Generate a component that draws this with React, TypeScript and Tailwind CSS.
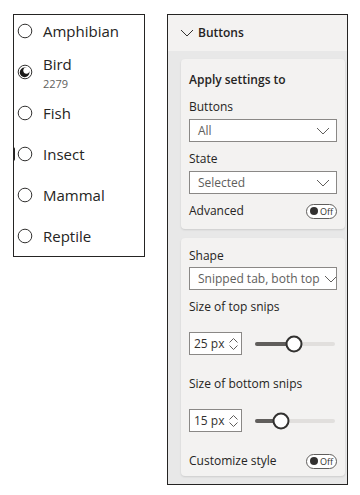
import React from "react";

const font = "font-['Open_Sans',sans-serif]";

function Radio({ filled }: { filled?: boolean }) {
  return (
    <svg width="16" height="16" viewBox="0 0 16 16" className="shrink-0">
      <circle cx="8" cy="8" r="6.8" fill="white" stroke="#323130" strokeWidth="1" />
      {filled && (
        <>
          <circle cx="7.6" cy="8.4" r="4.8" fill="#1b1a19" />
          <circle cx="9.4" cy="6.6" r="3.1" fill="white" />
        </>
      )}
    </svg>
  );
}

function Chevron({ className = "", color = "#323130" }: { className?: string; color?: string }) {
  return (
    <svg width="14" height="8" viewBox="0 0 14 8" className={className}>
      <path d="M1 1 L7 7 L13 1" fill="none" stroke={color} strokeWidth="1" />
    </svg>
  );
}

function Dropdown({ value }: { value: string }) {
  return (
    <div className="flex h-[23px] w-[148px] items-center justify-between overflow-hidden border border-[#8a8886] bg-white pl-[8px] pr-[6px]">
      <span className="whitespace-nowrap text-[12px] leading-none text-[#605e5c]">{value}</span>
      <Chevron className="ml-1 shrink-0" color="#605e5c" />
    </div>
  );
}

function Toggle() {
  return (
    <div className="flex h-[15px] w-[31px] items-center rounded-full border border-[#605e5c] bg-white pl-[3px]">
      <div className="h-[8px] w-[8px] rounded-full bg-[#323130]" />
      <span className="ml-[2px] text-[9px] leading-none text-[#323130]">Off</span>
    </div>
  );
}

function NumberSlider({ value, pct }: { value: string; pct: number }) {
  return (
    <div className="flex items-center">
      <div className="flex h-[23px] w-[53px] items-center justify-between border border-[#8a8886] bg-white pl-[4px] pr-[3px]">
        <span className="text-[12px] leading-none text-[#323130]">{value}</span>
        <div className="flex flex-col gap-[2px]">
          <svg width="9" height="5" viewBox="0 0 9 5">
            <path d="M0.5 4.5 L4.5 0.5 L8.5 4.5" fill="none" stroke="#605e5c" strokeWidth="1" />
          </svg>
          <svg width="9" height="5" viewBox="0 0 9 5">
            <path d="M0.5 0.5 L4.5 4.5 L8.5 0.5" fill="none" stroke="#605e5c" strokeWidth="1" />
          </svg>
        </div>
      </div>
      <div className="relative ml-[13px] h-[4px] w-[80px] rounded-full bg-[#e1dfdd]">
        <div className="h-full rounded-full bg-[#605e5c]" style={{ width: `${pct}%` }} />
        <div
          className="absolute top-1/2 h-[17px] w-[17px] -translate-x-1/2 -translate-y-1/2 rounded-full border-2 border-[#323130] bg-white"
          style={{ left: `${pct}%` }}
        />
      </div>
    </div>
  );
}

const items = ["Amphibian", "Bird", "Fish", "Insect", "Mammal", "Reptile"];

export default function App() {
  return (
    <div className={`${font} flex h-[495px] w-[360px] items-start bg-white text-[#252423]`}>
      {/* Left slicer */}
      <div className="relative ml-[13px] mt-[14px] h-[243px] w-[132px] overflow-hidden border border-[#252423] bg-white">
        <div className="absolute left-[-1px] top-[132px] h-[14px] w-[2px] rounded-r-full bg-[#252423]" />
        <div className="-mt-[5px] flex flex-col">
          {items.map((it) => (
            <div key={it} className="flex h-[41px] items-center pl-[3px]">
              <Radio filled={it === "Bird"} />
              {it === "Bird" ? (
                <div className="ml-[10px] mt-[2px] flex flex-col">
                  <span className="text-[15px] leading-[20px]">Bird</span>
                  <span className="mt-[3px] text-[11px] leading-[14px] text-[#605e5c]">2279</span>
                </div>
              ) : (
                <span className="ml-[10px] text-[15px] leading-[20px]">{it}</span>
              )}
            </div>
          ))}
        </div>
      </div>

      {/* Right format pane */}
      <div className="ml-[22px] mt-[14px] flex h-[471px] w-[181px] flex-col border border-[#252423] bg-[#e8e8e8]">
        <div className="flex h-[36px] shrink-0 items-center bg-[#f3f2f1] pl-[12px]">
          <Chevron />
          <span className="ml-[4px] text-[12px] font-semibold leading-none text-[#252423]">Buttons</span>
        </div>

        <div className="ml-[13px] mt-[8px] flex w-[164px] flex-col rounded-[4px] bg-[#f3f2f1] px-[8px] pb-[10px] pt-[13px] shadow-[0_1px_2px_rgba(0,0,0,0.12)]">
          <div className="text-[12px] font-semibold leading-[16px]">Apply settings to</div>
          <div className="mt-[11px] text-[12px] leading-[16px]">Buttons</div>
          <div className="mt-[4px]">
            <Dropdown value="All" />
          </div>
          <div className="mt-[9px] text-[12px] leading-[16px]">State</div>
          <div className="mt-[4px]">
            <Dropdown value="Selected" />
          </div>
          <div className="mt-[9px] flex h-[16px] items-center justify-between">
            <span className="text-[12px] leading-[16px]">Advanced</span>
            <Toggle />
          </div>
        </div>

        <div className="ml-[13px] mt-[9px] flex w-[164px] flex-col rounded-[4px] bg-[#f3f2f1] px-[8px] pb-[7px] pt-[10px] shadow-[0_1px_2px_rgba(0,0,0,0.12)]">
          <div className="text-[12px] leading-[16px]">Shape</div>
          <div className="mt-[3px]">
            <Dropdown value="Snipped tab, both top" />
          </div>
          <div className="mt-[9px] text-[12px] leading-[16px]">Size of top snips</div>
          <div className="mt-[17px]">
            <NumberSlider value="25 px" pct={49} />
          </div>
          <div className="mt-[21px] text-[12px] leading-[16px]">Size of bottom snips</div>
          <div className="mt-[17px]">
            <NumberSlider value="15 px" pct={32} />
          </div>
          <div className="mt-[21px] flex h-[16px] items-center justify-between">
            <span className="text-[12px] leading-[16px]">Customize style</span>
            <Toggle />
          </div>
        </div>
      </div>
    </div>
  );
}
